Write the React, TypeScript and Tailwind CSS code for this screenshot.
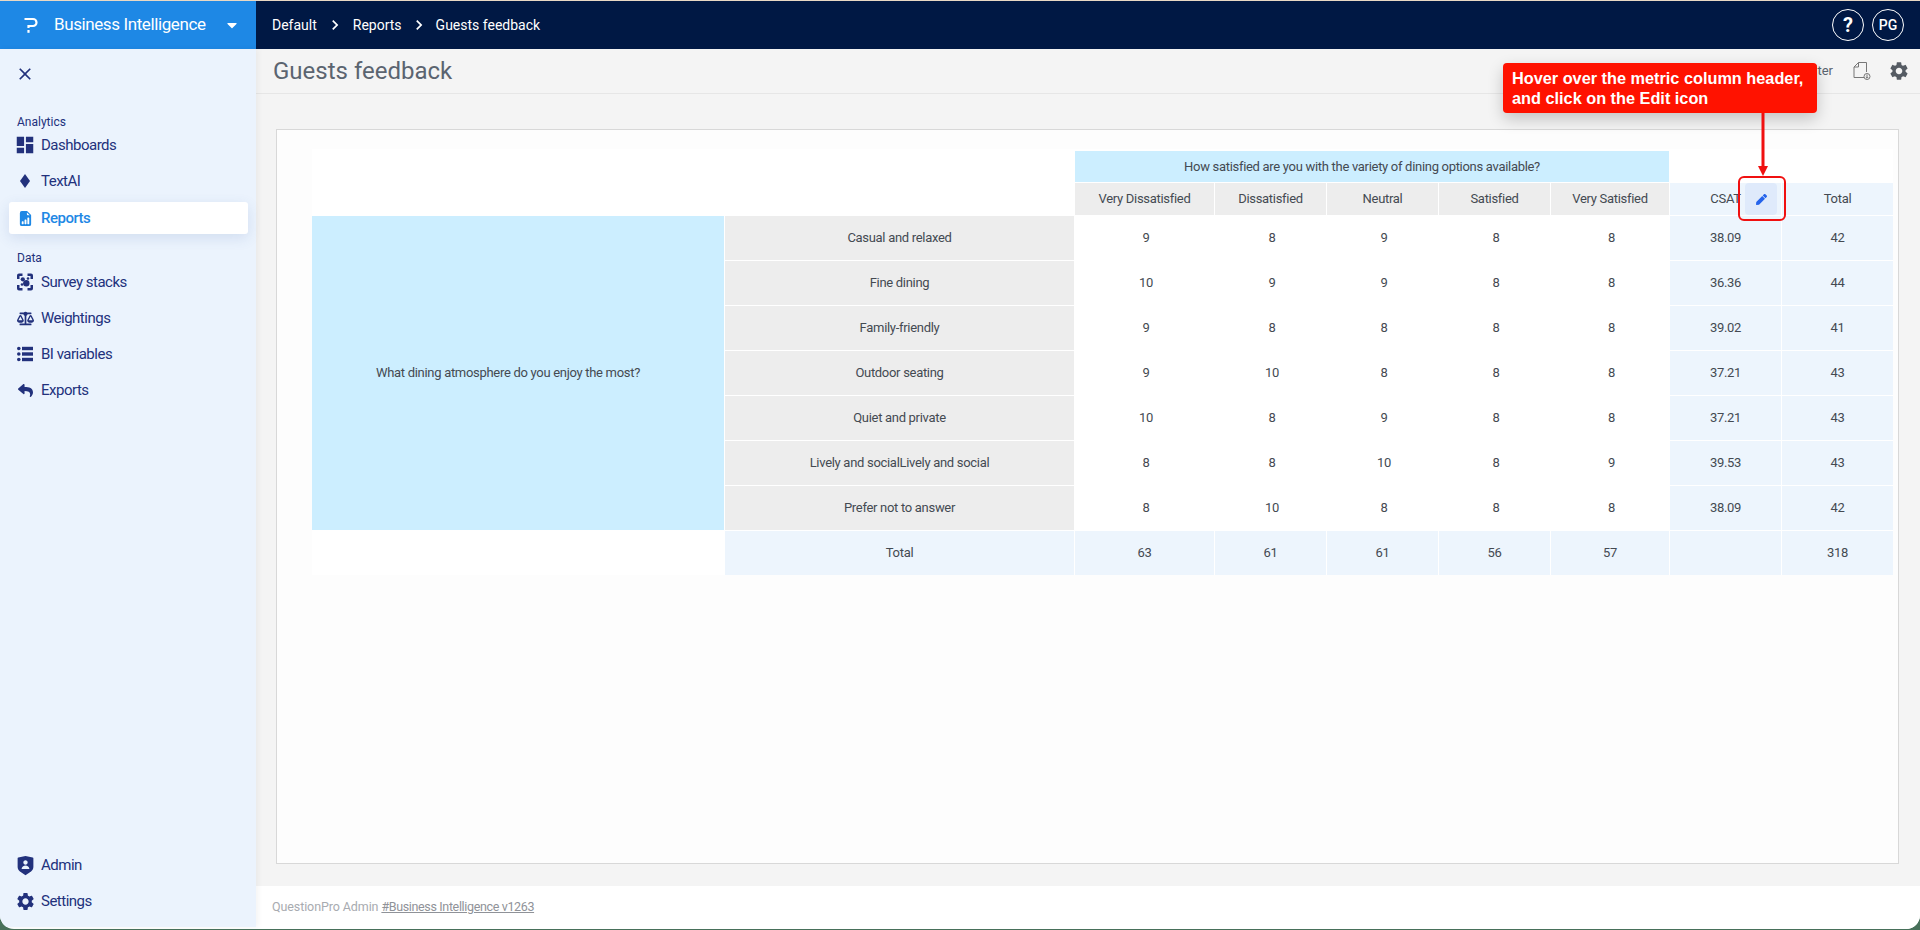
import React from 'react'
import { MdClose, MdDashboard, MdSettings, MdKeyboardArrowRight } from 'react-icons/md'
import { BsFileEarmarkBarGraphFill } from 'react-icons/bs'
import { FaBalanceScale, FaReply, FaCaretDown, FaPen } from 'react-icons/fa'
import { RiShieldUserFill } from 'react-icons/ri'

const answers = [
  { label: 'Casual and relaxed', values: ['9', '8', '9', '8', '8'], csat: '38.09', total: '42' },
  { label: 'Fine dining', values: ['10', '9', '9', '8', '8'], csat: '36.36', total: '44' },
  { label: 'Family-friendly', values: ['9', '8', '8', '8', '8'], csat: '39.02', total: '41' },
  { label: 'Outdoor seating', values: ['9', '10', '8', '8', '8'], csat: '37.21', total: '43' },
  { label: 'Quiet and private', values: ['10', '8', '9', '8', '8'], csat: '37.21', total: '43' },
  { label: 'Lively and socialLively and social', values: ['8', '8', '10', '8', '9'], csat: '39.53', total: '43' },
  { label: 'Prefer not to answer', values: ['8', '10', '8', '8', '8'], csat: '38.09', total: '42' },
]

const columns = ['Very Dissatisfied', 'Dissatisfied', 'Neutral', 'Satisfied', 'Very Satisfied']
const totals = ['63', '61', '61', '56', '57', '', '318']

const StacksIcon = () => (
  <svg viewBox="0 0 16 18" className="w-4 h-[18px]" fill="currentColor">
    <path d="M0 6V2.500A2 2 0 0 1 2 0.500H5.500V3H2.500V6H0zM10.500 0.500H14A2 2 0 0 1 16 2.500V6H13.500V3H10.500V0.500zM0 12H2.500V15H5.500V17.500H2A2 2 0 0 1 0 15.500V12zM13.500 12H16V15.500A2 2 0 0 1 14 17.500H10.500V15H13.500V12z" />
    <circle cx="5.800" cy="6.300" r="2.100" />
    <circle cx="9.300" cy="10.300" r="3.200" />
    <circle cx="11" cy="5.500" r="1.300" />
    <circle cx="5" cy="11.500" r="1.300" />
  </svg>
)

const DiamondIcon = () => (
  <svg viewBox="0 0 16 16" className="w-4 h-4" fill="currentColor">
    <path d="M8 1 L13 8 L8 15 L3 8 Z" />
  </svg>
)

const ListIcon = () => (
  <svg viewBox="0 0 16 16" className="w-4 h-4" fill="currentColor">
    <circle cx="1.800" cy="2.500" r="1.800" />
    <circle cx="1.800" cy="8" r="1.800" />
    <circle cx="1.800" cy="13.500" r="1.800" />
    <rect x="5" y="0.800" width="11" height="3.400" />
    <rect x="5" y="6.300" width="11" height="3.400" />
    <rect x="5" y="11.800" width="11" height="3.400" />
  </svg>
)

const NavItem = ({ icon, label, active }: { icon: React.ReactNode; label: string; active?: boolean }) => (
  <div
    className={
      active
        ? 'flex items-center h-8 mx-[9px] w-[239px] pl-2 gap-2 rounded-[3px] bg-white text-[#1e88e5] font-medium shadow-[0_4px_14px_rgba(60,90,160,0.14)] my-[3px]'
        : 'flex items-center h-9 pl-[17px] gap-2 text-[#22317c]'
    }
  >
    <span className="w-4 flex justify-center shrink-0">{icon}</span>
    <span className="text-[15px] tracking-[-0.5px]">{label}</span>
  </div>
)

const cell = 'flex items-center justify-center text-[13px] text-[#444a52] tracking-[-0.3px]'

const App = () => {
  return (
    <div className="h-[930px] w-[1920px] bg-[#47705a] overflow-hidden [font-family:Roboto,sans-serif]">
      <div className="h-[929px] flex flex-col rounded-b-[14px] overflow-hidden bg-white border-t border-[#e8d8c4]">
        <header className="h-12 flex shrink-0 bg-[#001844] text-white">
          <div className="w-[256px] bg-[#1e88e5] flex items-center pl-6">
            <svg viewBox="0 0 14 16" className="w-[14px] h-4" fill="none" stroke="white" strokeWidth="2.200">
              <path d="M0.500 2 H9 A3.500 3.500 0 0 1 9 9 H4.500 V11" />
              <rect x="3.400" y="13" width="2.200" height="2.800" fill="white" stroke="none" />
            </svg>
            <span className="ml-[16px] text-[17px] tracking-[-0.4px]">Business Intelligence</span>
            <FaCaretDown className="ml-[18px] w-4 h-4" />
          </div>
          <nav className="flex items-center pl-4 text-[14px]">
            <span>Default</span>
            <MdKeyboardArrowRight className="mx-2 w-[20px] h-[20px]" />
            <span>Reports</span>
            <MdKeyboardArrowRight className="mx-[7px] w-[20px] h-[20px]" />
            <span>Guests feedback</span>
          </nav>
          <div className="ml-auto flex items-center gap-2 pr-4">
            <div className="w-8 h-8 rounded-full border border-white flex items-center justify-center text-[20px] font-bold">?</div>
            <div className="w-8 h-8 rounded-full border border-white flex items-center justify-center text-[14px] font-medium">PG</div>
          </div>
        </header>

        <div className="flex flex-1 min-h-0">
          <aside className="w-[256px] shrink-0 bg-[#ebf3fd] flex flex-col mb-[2px] shadow-[2px_0_6px_rgba(0,0,0,0.05)] z-10 text-[#22317c]">
            <div className="h-[31px] pl-[15px] pt-[15px]">
              <MdClose className="w-[20px] h-[20px]" />
            </div>
            <div className="mt-[37px] pl-[17px] text-[12px] leading-[10px]">Analytics</div>
            <div className="flex flex-col">
              <NavItem icon={<MdDashboard className="w-[22px] h-[22px] shrink-0" />} label="Dashboards" />
              <NavItem icon={<DiamondIcon />} label="TextAI" />
              <NavItem icon={<BsFileEarmarkBarGraphFill className="w-[15px] h-[17px]" />} label="Reports" active />
            </div>
            <div className="mt-4 pl-[17px] text-[12px] leading-[11px]">Data</div>
            <div className="flex flex-col">
              <NavItem icon={<StacksIcon />} label="Survey stacks" />
              <NavItem icon={<FaBalanceScale className="w-[17px] h-[17px] shrink-0" />} label="Weightings" />
              <NavItem icon={<ListIcon />} label="BI variables" />
              <NavItem icon={<FaReply className="w-[15px] h-[15px]" />} label="Exports" />
            </div>
            <div className="mt-auto mb-[8px] flex flex-col">
              <NavItem icon={<RiShieldUserFill className="w-[21px] h-[21px] shrink-0" />} label="Admin" />
              <NavItem icon={<MdSettings className="w-[21px] h-[21px] shrink-0" />} label="Settings" />
            </div>
          </aside>

          <main className="flex-1 min-w-0 flex flex-col">
            <div className="flex-1 bg-[#f4f4f4] flex flex-col min-h-0">
              <div className="h-[45px] shrink-0 border-b border-[#e6e6e6] flex items-center pl-[17px] pr-[10px] text-[#5b6470]">
                <h1 className="text-[24px] leading-none">Guests feedback</h1>
                <span className="ml-auto text-[13px] mr-[20px]">Filter</span>
                <svg viewBox="0 0 18 18" className="w-[18px] h-[18px] mr-[17px] text-[#777]" fill="none" stroke="currentColor" strokeWidth="1">
                  <path d="M11 15.500H1V5L5.500 0.500H13.500V10" />
                  <path d="M5.500 0.500V5H1" />
                  <circle cx="14" cy="14.500" r="3" />
                  <path d="M14 12.500V16M12.800 15L14 16.200L15.200 15" />
                </svg>
                <MdSettings className="w-[22px] h-[22px] text-[#555b63]" />
              </div>
              <div className="flex-1 min-h-0 pt-[35px] pl-5 pr-[21px] pb-[22px]">
                <div className="h-full border border-[#d8d8d8] bg-[#fdfdfd] pl-[35px] pt-[19px]">
                  <div className="bg-white pt-[2px] w-[1581px]">
                    <div className="grid gap-px bg-white grid-cols-[412px_349px_139px_111px_111px_111px_118px_111px_111px] grid-rows-[31px_32px_repeat(8,44px)]">
                      <div className="col-span-2 row-span-2" />
                      <div className={`col-span-5 bg-[#cceeff] pr-5 ${cell}`}>
                        How satisfied are you with the variety of dining options available?
                      </div>
                      <div className="col-span-2" />
                      {columns.map((c) => (
                        <div key={c} className={`bg-[#ededed] ${cell}`}>{c}</div>
                      ))}
                      <div className={`bg-[#edf5fd] ${cell}`}>CSAT</div>
                      <div className={`bg-[#edf5fd] ${cell}`}>Total</div>

                      <div className={`row-span-7 bg-[#cceeff] pr-5 ${cell}`}>
                        What dining atmosphere do you enjoy the most?
                      </div>
                      {answers.map((a) => (
                        <React.Fragment key={a.label}>
                          <div className={`bg-[#ededed] ${cell}`}>{a.label}</div>
                          {a.values.map((v, i) => (
                            <div key={i} className={`${cell} pl-[3px]`}>{v}</div>
                          ))}
                          <div className={`bg-[#edf5fd] ${cell}`}>{a.csat}</div>
                          <div className={`bg-[#edf5fd] ${cell}`}>{a.total}</div>
                        </React.Fragment>
                      ))}

                      <div />
                      <div className={`bg-[#edf5fd] ${cell}`}>Total</div>
                      {totals.map((t, i) => (
                        <div key={i} className={`bg-[#edf5fd] ${cell}`}>{t}</div>
                      ))}
                    </div>
                  </div>
                </div>
              </div>
            </div>
            <footer className="h-[43px] shrink-0 bg-white flex items-center pl-4 text-[12.500px] text-[#a8abb0] tracking-[-0.1px]">
              QuestionPro Admin&nbsp;<span className="underline text-[#8f9298] tracking-[-0.35px]">#Business Intelligence v1263</span>
            </footer>
          </main>
        </div>
      </div>

      {/* annotation layer over the page */}
      <div className="absolute left-[1745px] top-[183px] w-8 h-8 rounded-[4px] bg-[#dfeafb] flex items-center justify-center">
        <FaPen className="w-[11px] h-[11px] text-[#2563eb]" />
      </div>
      <div className="absolute left-[1738px] top-[176px] w-[48px] h-[45px] rounded-[6px] border-2 border-[#f01010]" />
      <div className="absolute left-[1503px] top-[63px] w-[314px] h-[50px] rounded-[4px] bg-[#ff1200] text-white pl-[9px] flex items-center text-[16.300px] leading-5 font-bold shadow-[0_6px_16px_rgba(0,0,0,0.2)] [font-family:'Liberation_Sans',sans-serif]">
        <span>Hover over the metric column header,<br />and click on the Edit icon</span>
      </div>
      <svg className="absolute left-[1755px] top-[113px] w-4 h-[63px]" viewBox="0 0 16 63" fill="#f01010">
        <rect x="6.500" y="0" width="3" height="54" />
        <path d="M3 53H13L8 63Z" />
      </svg>
    </div>
  )
}

export default App
